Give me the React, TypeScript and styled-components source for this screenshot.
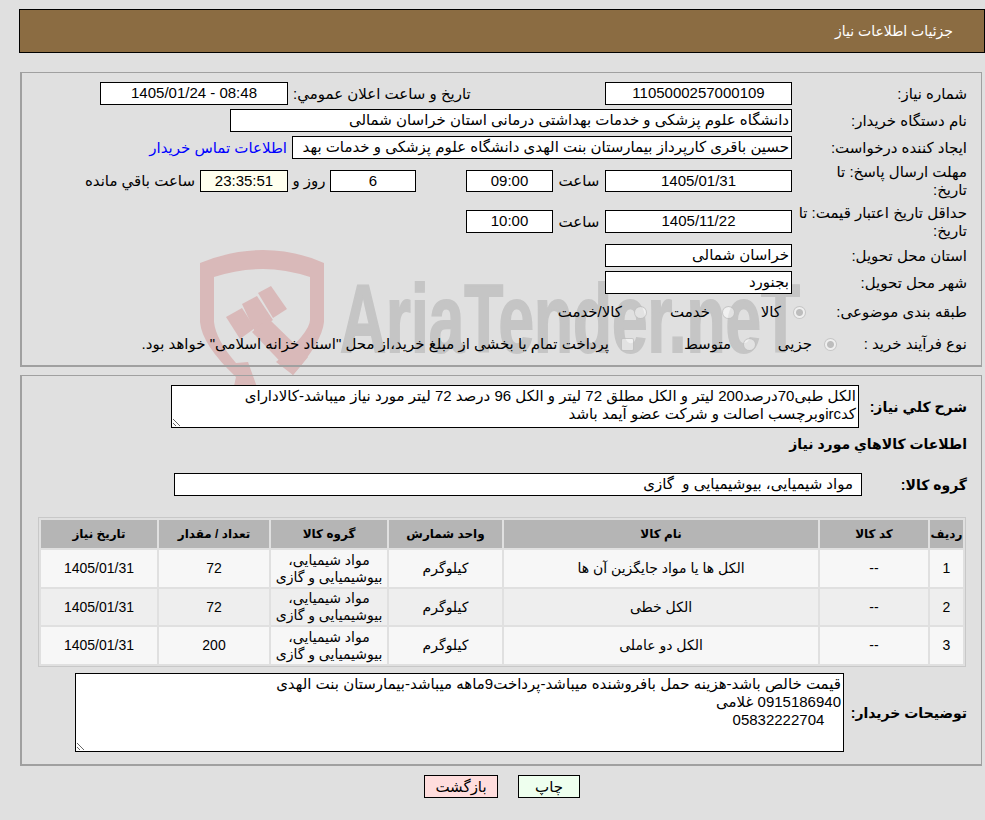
import React from 'react';
import styled, { createGlobalStyle } from 'styled-components';

const rows = [
    { id: 1, code: '--', name: 'الکل ها یا مواد جایگزین آن ها', unit: 'کیلوگرم', group: 'مواد شیمیایی، بیوشیمیایی و گازی', qty: '72', date: '1405/01/31' },
    { id: 2, code: '--', name: 'الکل خطی', unit: 'کیلوگرم', group: 'مواد شیمیایی، بیوشیمیایی و گازی', qty: '72', date: '1405/01/31' },
    { id: 3, code: '--', name: 'الکل دو عاملی', unit: 'کیلوگرم', group: 'مواد شیمیایی، بیوشیمیایی و گازی', qty: '200', date: '1405/01/31' },
];

function Watermark() {
    return (
        <WatermarkBox>
            <svg width="640" height="150" viewBox="0 0 640 150" direction="ltr">
                <g fill="#d9b9b9">
                    <path d="M0 13 Q32 0 63 0 Q95 0 124 13 L124 72 Q122 92 93 125 L76 112 Q110 82 110 70 L110 27 Q85 19 63 19 Q38 19 14 27 L14 72 Q16 90 36 113 L48 112 L57 137 L34 136 L36 127 Q2 95 0 72 Z" />
                    <polygon points="26,67 42,58 55,78 40,89" />
                    <polygon points="42,54 57,46 73,70 55,82" />
                    <polygon points="58,43 71,36 87,59 73,68" />
                    <polygon points="52,82 93,125 108,107 68,68" />
                </g>
                <WatermarkText x="140" y="102" textLength="460" lengthAdjust="spacingAndGlyphs">AriaTender.neT</WatermarkText>
            </svg>
        </WatermarkBox>
    );
}

function App() {
    return (
        <Page dir="rtl">
            <GlobalStyle />
            <Watermark />
            <Header>جزئیات اطلاعات نیاز</Header>

            <Panel $top={19} $height={295}>
                <Row $h={23}>
                    <Label>شماره نیاز:</Label>
                    <Field $w={187} $center>1105000257000109</Field>
                    <Label $w={307} $end>تاریخ و ساعت اعلان عمومي:</Label>
                    <Field $w={188} $center>08:48 - 1405/01/24</Field>
                </Row>
                <Row $h={23}>
                    <Label>نام دستگاه خریدار:</Label>
                    <Field $w={562}>دانشگاه علوم پزشکی و خدمات بهداشتی درمانی استان خراسان شمالی</Field>
                </Row>
                <Row $h={23}>
                    <Label>ایجاد کننده درخواست:</Label>
                    <Field $w={500}>حسین باقری کارپرداز بیمارستان بنت الهدی دانشگاه علوم پزشکی و خدمات بهد</Field>
                    <ContactLink href="#">اطلاعات تماس خریدار</ContactLink>
                </Row>
                <Row $h={36}>
                    <Label>مهلت ارسال پاسخ: تا<br />تاریخ:</Label>
                    <Field $w={187} $short $center>1405/01/31</Field>
                    <Label $w={42} $center>ساعت</Label>
                    <Field $w={87} $short $center>09:00</Field>
                    <Label $w={40} />
                    <Field $w={86} $short $center>6</Field>
                    <Label $w={32} $center>روز و</Label>
                    <Field $w={88} $short $center $tint>23:35:51</Field>
                    <Label $w={120}>ساعت باقي مانده</Label>
                </Row>
                <Row $h={37}>
                    <Label>حداقل تاریخ اعتبار قیمت: تا تاریخ:</Label>
                    <Field $w={187} $center>1405/11/22</Field>
                    <Label $w={42} $center>ساعت</Label>
                    <Field $w={87} $center>10:00</Field>
                </Row>
                <Row $h={23}>
                    <Label>استان محل تحویل:</Label>
                    <Field $w={187}>خراسان شمالی</Field>
                </Row>
                <Row $h={23}>
                    <Label>شهر محل تحویل:</Label>
                    <Field $w={187}>بجنورد</Field>
                </Row>
                <Row $h={28}>
                    <Label $w={156}>طبقه بندی موضوعی:</Label>
                    <Choice $w={66} $checked>کالا</Choice>
                    <Choice $w={83}>خدمت</Choice>
                    <Choice $w={95}>کالا/خدمت</Choice>
                </Row>
                <Row $h={28}>
                    <Label $w={125}>نوع فرآیند خرید :</Label>
                    <Choice $w={76} $checked>جزیی</Choice>
                    <Choice $w={117}>متوسط</Choice>
                    <CheckNote>پرداخت تمام یا بخشی از مبلغ خرید،از محل "اسناد خزانه اسلامی" خواهد بود.</CheckNote>
                </Row>
            </Panel>

            <Panel $top={8} $height={391}>
                <Row $h={43}>
                    <Heading $w={103}>شرح كلي نياز:</Heading>
                    <Notes $w={688} $h={43} readOnly defaultValue="الکل طبی70درصد200 لیتر و الکل مطلق 72 لیتر و الکل 96 درصد 72 لیتر مورد نیاز میباشد-کالادارای کدircوبرچسب اصالت و شرکت عضو آیمد باشد" />
                </Row>
                <SectionTitle>اطلاعات كالاهاي مورد نياز</SectionTitle>
                <Row $h={23}>
                    <Heading $w={100}>گروه کالا:</Heading>
                    <Field $w={688} $inset>مواد شیمیایی، بیوشیمیایی و  گازی</Field>
                </Row>
                <GoodsTable>
                    <colgroup>
                        <col width="33" />
                        <col width="108" />
                        <col width="314" />
                        <col width="113" />
                        <col width="116" />
                        <col width="110" />
                        <col width="116" />
                    </colgroup>
                    <thead>
                        <tr>
                            <HeadCell>ردیف</HeadCell>
                            <HeadCell>کد کالا</HeadCell>
                            <HeadCell>نام کالا</HeadCell>
                            <HeadCell>واحد شمارش</HeadCell>
                            <HeadCell>گروه کالا</HeadCell>
                            <HeadCell>تعداد / مقدار</HeadCell>
                            <HeadCell>تاریخ نیاز</HeadCell>
                        </tr>
                    </thead>
                    <tbody>
                        {rows.map((row) => (
                            <BodyRow key={row.id}>
                                <td>{row.id}</td>
                                <td>{row.code}</td>
                                <td>{row.name}</td>
                                <td>{row.unit}</td>
                                <td>{row.group}</td>
                                <td>{row.qty}</td>
                                <td>{row.date}</td>
                            </BodyRow>
                        ))}
                    </tbody>
                </GoodsTable>
                <Row $h={79}>
                    <Heading $w={118}>توضیحات خریدار:</Heading>
                    <Notes $w={769} $h={79} readOnly defaultValue={'قیمت خالص باشد-هزینه حمل بافروشنده میباشد-پرداخت9ماهه میباشد-بیمارستان بنت الهدی\n0915186940 غلامی\n    05832222704'} />
                </Row>
            </Panel>

            <Actions>
                <ActionButton $w={62} $bg="#eeffee">چاپ</ActionButton>
                <ActionButton $w={74} $bg="#ffdddd">بازگشت</ActionButton>
            </Actions>
        </Page>
    );
}

const GlobalStyle = createGlobalStyle`
    html, body {
        margin: 0;
        padding: 0;
        background: #e0e0e0;
    }
    body {
        font-family: "Liberation Sans", "DejaVu Sans", sans-serif;
        font-size: 15px;
        color: #000;
    }
`;

const Page = styled.div`
    position: relative;

    width: 985px;
    height: 820px;
    overflow: hidden;
    padding-top: 9px;
    box-sizing: border-box;
`;

const WatermarkBox = styled.div`
    position: absolute;
    top: 250px;
    left: 200px;
    z-index: 0;
`;

const WatermarkText = styled.text`
    font-family: "Liberation Sans", sans-serif;
    font-size: 96px;
    font-weight: 700;
    fill: #c5c5c5;
    stroke: #c5c5c5;
    stroke-width: 2px;
`;

const Header = styled.div`
    position: relative;
    z-index: 1;

    display: flex;
    align-items: center;

    width: 966px;
    height: 44px;
    padding-right: 31px;
    box-sizing: border-box;

    border: 1px solid #000;
    background-color: #8b6c42;
    color: #fff;
    font-size: 14px;
`;

const Panel = styled.div<{ $top: number; $height: number }>`
    position: relative;
    z-index: 1;

    display: flex;
    flex-direction: column;
    gap: 4px;

    width: 962px;
    height: ${(p) => p.$height}px;
    margin-top: ${(p) => p.$top}px;
    margin-right: 3px;
    padding: 9px 14px 0 0;
    box-sizing: border-box;

    border: 1px solid #a0a0a0;
    border-left-width: 2px;
    border-bottom-width: 2px;
`;

const Row = styled.div<{ $h: number }>`
    display: flex;
    align-items: center;
    gap: 5px;

    height: ${(p) => p.$h}px;
    flex-shrink: 0;
`;

const Label = styled.div<{ $w?: number; $end?: boolean; $center?: boolean }>`
    flex: none;
    display: ${(p) => (p.$center ? 'flex' : 'block')};
    justify-content: center;
    width: ${(p) => p.$w ?? 170}px;
    line-height: 18px;
    white-space: ${(p) => (p.$center ? 'nowrap' : 'normal')};
    text-align: ${(p) => (p.$end ? 'left' : 'right')};
`;

const Heading = styled(Label)`
    font-size: 14px;
    font-weight: 700;
`;

const SectionTitle = styled.div`
    height: 24px;
    line-height: 24px;
    margin-bottom: 13px;
    font-size: 14px;
    font-weight: 700;
`;

const Field = styled.div<{ $w: number; $center?: boolean; $short?: boolean; $tint?: boolean; $inset?: boolean }>`
    flex: none;
    width: ${(p) => p.$w}px;
    height: ${(p) => (p.$short ? 22 : 23)}px;
    padding: 0 ${(p) => (p.$inset ? 8 : 2)}px;
    box-sizing: border-box;
    overflow: hidden;

    border: 1px solid #000;
    background-color: ${(p) => (p.$tint ? '#ffffee' : '#fff')};
    line-height: 20px;
    white-space: pre;
    text-align: ${(p) => (p.$center ? 'center' : 'right')};
`;

const ContactLink = styled.a`
    color: #0000ff;
    text-decoration: none;
    white-space: nowrap;
`;

const Choice = styled.label<{ $w: number; $checked?: boolean }>`
    flex: none;
    display: flex;
    align-items: center;
    gap: 12px;
    width: ${(p) => p.$w}px;

    &::before {
        content: '';
        flex: none;
        width: 13px;
        height: 13px;
        box-sizing: border-box;
        border-radius: 50%;
        border: 1px solid rgba(170, 170, 170, 0.6);
        background: ${(p) => (p.$checked ? 'radial-gradient(circle, #bdbdbd 0 3px, #efefef 4px)' : 'rgba(255, 255, 255, 0.5)')};
    }
`;

const CheckNote = styled.label`
    display: flex;
    align-items: center;
    gap: 12px;
    white-space: nowrap;

    &::before {
        content: '';
        flex: none;
        width: 13px;
        height: 13px;
        box-sizing: border-box;
        border: 1px solid rgba(170, 170, 170, 0.6);
        border-radius: 2px;
        background: rgba(255, 255, 255, 0.5);
    }
`;

const Notes = styled.textarea<{ $w: number; $h: number }>`
    flex: none;
    width: ${(p) => p.$w}px;
    height: ${(p) => p.$h}px;
    padding: 1px 2px;
    box-sizing: border-box;
    overflow: hidden;

    border: 1px solid #000;
    background-color: #fff;
    font: inherit;
    line-height: 18px;
    outline: none;
`;

const GoodsTable = styled.table`
    flex: none;
    width: 928px;
    height: 150px;
    margin: 17px 1px 2px 0;
    table-layout: fixed;
    border: 1px solid #c8c8c8;
    border-spacing: 2px;
    border-collapse: separate;
`;

const HeadCell = styled.th`
    height: 28px;
    padding: 0;
    background-color: #b5b5b5;
    font-size: 12px;
    font-weight: 700;
    text-align: center;
`;

const BodyRow = styled.tr`
    & > td {
        height: 37px;
        padding: 0;
        background-color: #f7f7f7;
        font-size: 14px;
        line-height: 17px;
        text-align: center;
    }

    &:nth-child(even) > td {
        height: 36px;
        background-color: #eeeeee;
    }
`;

const Actions = styled.div`
    position: relative;
    z-index: 1;

    display: flex;
    justify-content: center;
    gap: 20px;

    width: 985px;
    margin-top: 9px;
    padding-left: 19px;
    box-sizing: border-box;
`;

const ActionButton = styled.button<{ $w: number; $bg: string }>`
    width: ${(p) => p.$w}px;
    height: 23px;
    padding: 0;
    border: 1px solid #000;
    background-color: ${(p) => p.$bg};
    font: inherit;
`;

export default App;
